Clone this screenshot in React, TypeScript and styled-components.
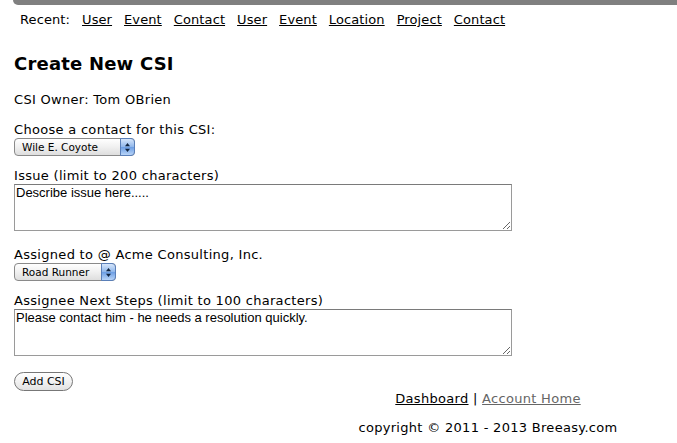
import React from "react";
import styled, { createGlobalStyle } from "styled-components";

const Global = createGlobalStyle`
  html, body { margin: 0; padding: 0; background: #fff; overflow: hidden; }
  body { font-family: Verdana, "DejaVu Sans", sans-serif; font-size: 13px; color: #000; letter-spacing: 0.3px; }
`;

const Page = styled.div`
  width: 950px;
  margin-left: 13px;
`;

const TopBar = styled.div`
  height: 5px;
  background: #808080;
  border-bottom-left-radius: 6px;
`;

const Recent = styled.nav`
  display: flex;
  gap: 12px;
  margin: 7px 0 0 7px;
  line-height: 16px;
  letter-spacing: 0.1px;
`;

const NavLink = styled.a<{ $muted?: boolean }>`
  color: ${(p) => (p.$muted ? "#666" : "#000")};
  text-decoration: underline;
`;

const Content = styled.div`
  padding-left: 1px;
`;

const Title = styled.h1`
  margin: 25px 0 0;
  font-size: 18px;
  line-height: 22px;
  font-weight: bold;
  letter-spacing: 0.2px;
`;

const Line = styled.p<{ $gap: number }>`
  margin: ${(p) => p.$gap}px 0 0;
  line-height: 16px;
`;

const SelectWrap = styled.span<{ $w: number }>`
  position: relative;
  display: block;
  width: ${(p) => p.$w}px;
  height: 18px;
`;

const Select = styled.select`
  appearance: none;
  -webkit-appearance: none;
  box-sizing: border-box;
  width: 100%;
  height: 18px;
  margin: 0;
  padding: 0 0 0 7px;
  border: 1px solid #8a8a8a;
  border-radius: 4px;
  background: linear-gradient(#ffffff, #f0f0f0 50%, #dedede);
  font-family: "Lucida Grande", "DejaVu Sans", sans-serif;
  font-size: 10.5px;
  letter-spacing: 0;
  line-height: 16px;
  color: #000;
  outline: none;
`;

const ArrowCap = styled.span`
  position: absolute;
  top: 0;
  right: 0;
  width: 15px;
  height: 18px;
  box-sizing: border-box;
  border: 1px solid #5a7fb8;
  border-radius: 0 4px 4px 0;
  background: linear-gradient(#d6e6fb, #8fb6ea 50%, #6b9de3 51%, #b8d4f8);
  display: flex;
  align-items: center;
  justify-content: center;
  pointer-events: none;
`;

const TextArea = styled.textarea`
  display: block;
  box-sizing: border-box;
  width: 498px;
  height: 47px;
  margin: 0;
  padding: 0 1px;
  border: 1px solid #9a9a9a;
  border-top-color: #7a7a7a;
  font-family: "Liberation Sans", Arial, sans-serif;
  font-size: 13px;
  letter-spacing: 0;
  line-height: 15px;
  color: #000;
  outline: none;
  resize: both;
`;

const Block = styled.div<{ $gap: number }>`
  margin-top: ${(p) => p.$gap}px;
`;

const Button = styled.button`
  display: block;
  box-sizing: border-box;
  width: 59px;
  height: 19px;
  margin: 16px 0 0;
  padding: 0;
  border: 1px solid #777;
  border-radius: 10px;
  background: linear-gradient(#ffffff, #f2f2f2 50%, #e2e2e2);
  font-family: "Lucida Grande", "DejaVu Sans", sans-serif;
  font-size: 11px;
  letter-spacing: 0;
  color: #000;
`;

const Footer = styled.footer`
  text-align: center;
  line-height: 16px;
`;

const FooterLinks = styled.div`
  margin-top: 0;
`;

const Copyright = styled.div`
  margin-top: 13px;
`;

const Arrows = () => (
  <svg width="7" height="11" viewBox="0 0 7 11">
    <path d="M3.5 1 L6 4.2 L1 4.2 Z" fill="#10243f" />
    <path d="M3.5 10 L6 6.8 L1 6.8 Z" fill="#10243f" />
  </svg>
);

const DropDown = ({ w, value }: { w: number; value: string }) => (
  <SelectWrap $w={w}>
    <Select defaultValue={value}>
      <option>{value}</option>
    </Select>
    <ArrowCap>
      <Arrows />
    </ArrowCap>
  </SelectWrap>
);

export default function App() {
  const recent = ["User", "Event", "Contact", "User", "Event", "Location", "Project", "Contact"];
  return (
    <>
      <Global />
      <Page>
        <TopBar />
        <Recent>
          <span>Recent:</span>
          {recent.map((r, i) => (
            <NavLink key={i} href="#">
              {r}
            </NavLink>
          ))}
        </Recent>
        <Content>
          <Title>Create New CSI</Title>
          <Line $gap={17}>CSI Owner: Tom OBrien</Line>
          <Line $gap={14}>Choose a contact for this CSI:</Line>
          <DropDown w={121} value="Wile E. Coyote" />
          <Line $gap={12}>Issue (limit to 200 characters)</Line>
          <TextArea defaultValue="Describe issue here....." />
          <Line $gap={16}>Assigned to @ Acme Consulting, Inc.</Line>
          <Block $gap={0}>
            <DropDown w={102} value="Road Runner" />
          </Block>
          <Line $gap={12}>Assignee Next Steps (limit to 100 characters)</Line>
          <TextArea defaultValue="Please contact him - he needs a resolution quickly." />
          <Button>Add CSI</Button>
        </Content>
        <Footer>
          <FooterLinks>
            <NavLink href="#">Dashboard</NavLink> | <NavLink href="#" $muted>Account Home</NavLink>
          </FooterLinks>
          <Copyright>copyright © 2011 - 2013 Breeasy.com</Copyright>
        </Footer>
      </Page>
    </>
  );
}
